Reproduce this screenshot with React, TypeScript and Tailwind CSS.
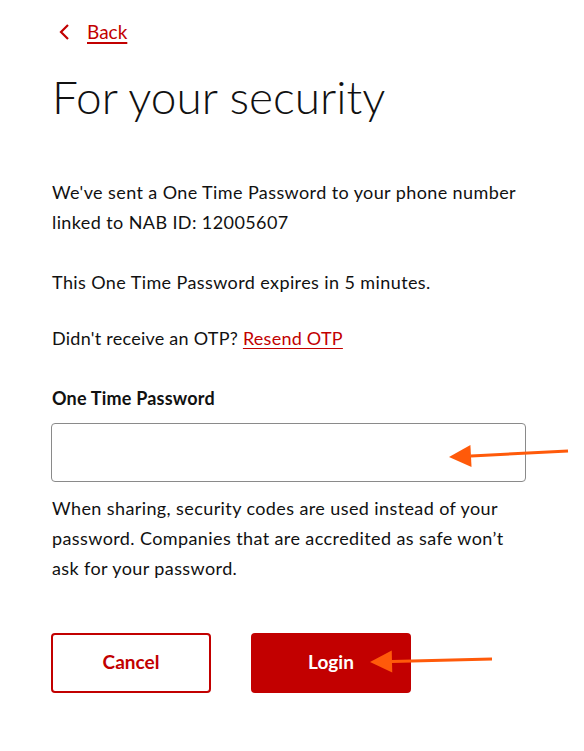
import React from "react";

const red = "text-[#c20000]";

const Arrow = ({ x1, y1, x2, y2 }: { x1: number; y1: number; x2: number; y2: number }) => {
  const ang = Math.atan2(y1 - y2, x1 - x2);
  const len = 22;
  const w = 11;
  const bx = x2 + Math.cos(ang) * len;
  const by = y2 + Math.sin(ang) * len;
  const px = -Math.sin(ang) * w;
  const py = Math.cos(ang) * w;
  return (
    <g>
      <line x1={x1} y1={y1} x2={bx} y2={by} stroke="#ff5a0a" strokeWidth={3} />
      <polygon points={`${x2},${y2} ${bx + px},${by + py} ${bx - px},${by - py}`} fill="#ff5a0a" />
    </g>
  );
};

const App = () => {
  return (
    <div
      className="relative w-[584px] h-[751px] bg-white text-[#111] overflow-hidden"
      style={{ fontFamily: "Lato, 'Noto Sans', sans-serif" }}
    >
      <div className="pl-[52px] pr-[58px] pt-[18px]">
        <a href="#" className={`flex items-center gap-[16px] ${red} text-[19px]`}>
          <svg width="14" height="18" viewBox="0 0 14 18" className="ml-[5px]">
            <path d="M11 2 L4 9 L11 16" fill="none" stroke="#c20000" strokeWidth="2.2" />
          </svg>
          <span className="underline underline-offset-[3px] decoration-[1.5px]">Back</span>
        </a>

        <h1 className="mt-[20px] text-[46px] font-light leading-[60px] tracking-[0px]">For your security</h1>

        <div className="mt-[50px] text-[18px] leading-[30px] tracking-[0.4px]">
          <p>
            We've sent a One Time Password to your phone number
            <br />
            linked to NAB ID: 12005607
          </p>
          <p className="mt-[30px]">This One Time Password expires in 5 minutes.</p>
          <p className="mt-[26px] tracking-[0.25px]">
            Didn't receive an OTP?{" "}
            <a href="#" className={`${red} underline underline-offset-[3px]`}>
              Resend OTP
            </a>
          </p>
        </div>

        <label className="block mt-[30px] text-[18px] font-bold leading-[30px] tracking-[0.2px]">One Time Password</label>
        <input
          type="text"
          className="mt-[10px] block w-[475px] h-[59px] -ml-[1px] border border-[#8a8a8a] rounded-[4px] outline-none"
        />

        <p className="mt-[11px] text-[18px] leading-[30px] w-[470px] tracking-[0.4px]">
          When sharing, security codes are used instead of your password. Companies that are accredited as safe won’t
          ask for your password.
        </p>

        <div className="mt-[50px] flex gap-[40px] -ml-[1px]">
          <button className={`w-[160px] h-[60px] border-2 border-[#c20000] rounded-[4px] ${red} font-bold text-[19px]`}>
            Cancel
          </button>
          <button className="w-[160px] h-[60px] bg-[#c20000] rounded-[4px] text-white font-bold text-[19px]">
            Login
          </button>
        </div>
      </div>

      <svg className="absolute inset-0 pointer-events-none" width="584" height="751">
        <Arrow x1={568} y1={451} x2={449} y2={457} />
        <Arrow x1={492} y1={659} x2={370} y2={662} />
      </svg>
    </div>
  );
};

export default App;
